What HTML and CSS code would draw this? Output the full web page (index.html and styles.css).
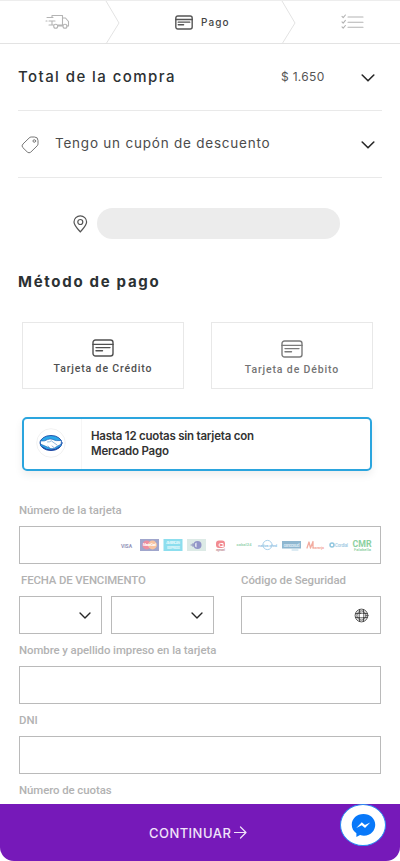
FILE: index.html
```
<!DOCTYPE html>
<html lang="es">
<head>
<meta charset="utf-8">
<title>Pago</title>
<link rel="stylesheet" href="styles.css">
</head>
<body>
<svg class="defs" width="0" height="0">
  <symbol id="card" viewBox="0 0 22 18">
    <rect x="1" y="1" width="20" height="16" rx="2.5"/>
    <path d="M1 5.4H21M4 8.6H18M4 11.8H10.5"/>
  </symbol>
  <symbol id="chevron" viewBox="0 0 14 8"><path d="M1.2 1L7 6.8L12.8 1"/></symbol>
</svg>
<div class="screen">
  <header class="steps">
    <div class="step step-ship">
      <svg class="truck" width="25" height="16" viewBox="0 0 25 16"><path d="M7 3V1.5H17.5V11H13M7 7V11H8.5M17.5 4H20.5L23.5 7.5V12H21.5M17.5 12H13M2 3.5H8M4 7H10M1 7H2M4 11H8"/><circle cx="10.7" cy="12.3" r="2"/><circle cx="20" cy="12.3" r="2"/></svg>
    </div>
    <svg class="divider" width="15" height="43" viewBox="0 0 15 43"><path d="M1 0L14 22L1 43"/></svg>
    <div class="step step-pay">
      <svg class="pay-icon" width="18" height="15"><use href="#card"/></svg>
      <span>Pago</span>
    </div>
    <svg class="divider" width="15" height="43" viewBox="0 0 15 43"><path d="M1 0L14 22L1 43"/></svg>
    <div class="step step-list">
      <svg class="checks" width="23" height="16" viewBox="0 0 23 16"><path d="M7 3H22M7 8.2H22M7 13.2H22"/><path d="M1 2.4L2.2 3.7L4.4 1M1 7.8L2.2 9.1L4.4 6.4M1 12.9L2.2 14.2L4.4 11.5"/></svg>
    </div>
  </header>

  <section class="row">
    <h2 class="total">Total de la compra</h2>
    <span class="amount">$ 1.650</span>
    <svg class="chev" width="14" height="8"><use href="#chevron"/></svg>
  </section>
  <section class="row">
    <svg class="tag" width="18" height="18" viewBox="0 0 18 18"><path d="M8.3 1.8Q9 1 10.2 1H13.5Q17 1 17 4.5V7.8Q17 9 16.2 9.8L9.7 16.2Q8 17.6 6.3 16L1.8 11.6Q.2 10 1.7 8.3Z"/><circle cx="13.3" cy="5" r="1.3"/></svg>
    <span class="coupon">Tengo un cupón de descuento</span>
    <svg class="chev" width="14" height="8"><use href="#chevron"/></svg>
  </section>

  <div class="address">
    <svg class="pin" width="15" height="18" viewBox="0 0 15 18"><path d="M7.3 17C5 14 1 10.5 1 7A6.3 6.2 0 0 1 13.6 7C13.6 10.5 9.6 14 7.3 17Z"/><circle cx="7.3" cy="7" r="2.5"/></svg>
    <div class="pill"></div>
  </div>

  <h2 class="method">Método de pago</h2>
  <div class="options">
    <div class="option"><svg width="22" height="18"><use href="#card"/></svg><span>Tarjeta de Crédito</span></div>
    <div class="option debit"><svg width="22" height="18"><use href="#card"/></svg><span>Tarjeta de Débito</span></div>
  </div>

  <div class="mercado">
    <div class="mp-logo">
      <svg width="30" height="30" viewBox="0 0 30 30"><circle class="ring" cx="15" cy="15" r="14.3"/><ellipse cx="15" cy="15" rx="11" ry="7.5" fill="#29a7e8" stroke="#2456ae"/><path d="M4.5 13Q9 13.5 11.5 11.6Q14 10.5 16 11.2Q20 13.4 25.5 12.5L25 16.3L20.8 18.5Q16 22.5 12 19.3L5 16.3Z" fill="#fff" stroke="#2965b8" stroke-width=".7"/><path d="M11.5 14Q14 14.2 15.3 12.8L21 17M12 18L14 20M16 18L18 19.5" fill="none" stroke="#5187c3" stroke-width=".6"/><path d="M6.2 19Q15 25.5 23.8 19" fill="none" stroke="#293d9b" stroke-width="1"/></svg>
    </div>
    <p>Hasta 12 cuotas sin tarjeta con<br>Mercado Pago</p>
  </div>

  <form class="form">
    <label class="number-label">Número de la tarjeta</label>
    <div class="field brands">
      <svg width="255" height="16" viewBox="0 0 255 16">
        <text x="4" y="10.5" textLength="11" class="brand bold" font-size="5" fill="#9192b8">VISA</text>
        <rect x="23" y="2" width="19" height="12" fill="#a0a6cc"/><circle cx="29.7" cy="8" r="4.4" fill="#ee8e9f"/><circle cx="35.5" cy="8" r="4.4" fill="#f8c3a0"/><text x="26" y="9.3" textLength="13" class="brand bold" font-size="3.4" fill="#fff">MasterCard</text>
        <rect x="46.5" y="2" width="19" height="12" fill="#8cdeee"/><text x="49" y="7.3" textLength="14" class="brand bold" font-size="4" fill="#dff7fb">AMERICAN</text><text x="50" y="11.5" textLength="13" class="brand bold" font-size="4" fill="#dff7fb">EXPRESS</text>
        <rect x="70" y="2" width="19" height="12" fill="#dceae6"/><circle cx="80.5" cy="8" r="4" fill="#9295c8"/><path d="M79.5 5.5A2.7 2.7 0 0 0 79.5 10.5Z" fill="#f4f7fa"/><path d="M74 8H78M76 6.5V9.5" stroke="#8f94bf"/>
        <rect x="99" y="3.5" width="9" height="7.5" rx="3" fill="#f28b91"/><path d="M106 9.5H103.500A1.500 1.500 0 0 1 103.500 6.500H106V10" fill="none" stroke="#fff"/><text x="99" y="14" textLength="9" class="brand" font-size="3" fill="#c999a0">argencard</text>
        <text x="119.5" y="9.3" textLength="15" class="brand bold" font-size="4" fill="#9bd5b4">cabal24</text>
        <circle cx="150.5" cy="8" r="4.6" fill="none" stroke="#a8d0eb"/><text x="141" y="9.5" textLength="19" class="brand bold" font-size="4" fill="#98c5e5">nativa cred</text>
        <rect x="165" y="4" width="19" height="7.5" fill="#8fb7d0"/><text x="166.5" y="9.5" textLength="16" class="brand bold" font-size="5" fill="#d3e5f0">cencosud</text><path d="M175 13H181" stroke="#b9d8e8"/>
        <path d="M190 11L192 5L193.5 11L196 4.5V11" fill="none" stroke="#f2aca0" stroke-width="1.3"/><text x="196" y="12" textLength="11" class="brand" font-size="3.6" fill="#f2a092">naranja</text>
        <circle cx="215" cy="8" r="2" fill="none" stroke="#8fc6df" stroke-width="1.5"/><text x="218" y="9.7" textLength="13" class="brand" font-size="4.5" fill="#9bc9df">Cordial</text>
        <text x="235.500" y="9.500" textLength="19" lengthAdjust="spacingAndGlyphs" class="brand bold" font-size="8.800" fill="#8bd0a0">CMR</text><text x="237" y="14" textLength="17" class="brand" font-size="4" fill="#83cb99">Falabella</text>
      </svg>
    </div>
    <div class="split">
      <div class="expiry">
        <label class="expiry-label">FECHA DE VENCIMENTO</label>
        <div class="selects">
          <div class="field month"><svg class="chev small" width="12" height="7"><use href="#chevron"/></svg></div>
          <div class="field year"><svg class="chev small" width="12" height="7"><use href="#chevron"/></svg></div>
        </div>
      </div>
      <div class="security">
        <label class="security-label">Código de Seguridad</label>
        <div class="field code">
          <svg class="help" width="15" height="15" viewBox="0 0 15 15"><circle cx="7.5" cy="7.5" r="6.4"/><circle cx="7.5" cy="7.5" r="4.6"/><rect x="5.2" y="5.2" width="4.6" height="4.6" rx="1.5"/><path d="M5.5 1.5V5.500M9.500 1.500V5.500M5.500 9.500V13.500M9.500 9.500V13.500M1.500 5.500H5.500M1.500 9.500H5.500M9.500 5.500H13.500M9.500 9.500H13.500"/></svg>
        </div>
      </div>
    </div>
    <label class="name-label">Nombre y apellido impreso en la tarjeta</label>
    <div class="field"></div>
    <label class="dni-label">DNI</label>
    <div class="field"></div>
    <label class="fees-label">Número de cuotas</label>
  </form>

  <footer class="continue">
    <span>CONTINUAR</span>
    <svg width="13" height="13" viewBox="0 0 13 13"><path d="M.5 6.5H12M6.500 1L12 6.500L6.500 12"/></svg>
    <div class="chat">
      <svg width="25" height="25" viewBox="0 0 26 26"><path d="M13 1C6 1 .8 5.800.8 12.200C.8 16 2.600 19 5.600 21V25L9.400 23C19 25.500 25.200 19 25.200 12.200C25.200 5.800 20 1 13 1Z" fill="#0878f9"/><path d="M5.500 15.500L11.200 9.500L14.500 12.500L20 9.800L14.600 15.700L11.200 12.800Z" fill="#fff"/></svg>
    </div>
  </footer>
</div>
</body>
</html>
```
FILE: styles.css
```
* { box-sizing: border-box; }
body { margin: 0; background: #fff; font-family: Inter, sans-serif; color: #2c3133; }
h2, p { margin: 0; }
svg { display: block; flex: none; fill: none; stroke-linecap: round; stroke-linejoin: round; }
.defs { position: absolute; }
.screen { width: 400px; height: 861px; overflow: hidden; display: flex; flex-direction: column; }

.steps { height: 44px; flex: none; display: flex; border-top: 1px solid #ededed; border-bottom: 1px solid #e3e3e3; }
.step { display: flex; align-items: center; }
.step-ship { width: 105px; padding-left: 45px; }
.step-pay { width: 161px; padding-left: 55px; gap: 8px; font-size: 10px; font-weight: 500; letter-spacing: 1.05px; color: #444; }
.step-pay span { margin-top: -1px; }
.step-list { padding-left: 45px; }
.divider { stroke: #e3e3e3; }
.truck, .checks { stroke: #b4b4b4; stroke-width: 1.1; }
.pay-icon { stroke: #555; stroke-width: 1.7; }

.row { height: 67px; flex: none; margin: 0 18px; padding-right: 7px; display: flex; align-items: center; border-bottom: 1px solid #e9e9e9; }
.total { width: 263px; margin-top: -2px; font-size: 15px; font-weight: 500; letter-spacing: 1.43px; white-space: nowrap; }
.amount { flex: 1; margin-top: -1px; font-size: 12px; letter-spacing: .3px; color: #555; }
.chev { margin-top: 1px; stroke: #282828; stroke-width: 1.6; }
.tag { margin: 1px 17px 0 3px; stroke: #777; }
.coupon { flex: 1; margin: -2px 0 0 -1px; font-size: 13.5px; letter-spacing: .78px; color: #4c4c4c; white-space: nowrap; }

.address { height: 31px; flex: none; margin: 30px 0 0 73px; display: flex; align-items: center; gap: 9px; }
.pin { stroke: #555; stroke-width: 1.2; }
.pill { width: 243px; height: 31px; border-radius: 16px; background: #ececec; }

.method { height: 24px; flex: none; margin: 31px 0 0 18px; line-height: 24px; font-size: 15px; font-weight: 700; letter-spacing: 1.7px; white-space: nowrap; }
.options { flex: none; display: flex; gap: 27px; margin: 28px 0 0 22px; }
.option { width: 162px; height: 67px; border: 1px solid #e8e8e8; padding-top: 16px; display: flex; flex-direction: column; align-items: center; gap: 5px; font: 500 10.5px/14px Roboto, sans-serif; letter-spacing: .86px; color: #505050; }
.option svg { stroke: #505050; stroke-width: 1.4; }
.debit { padding-top: 17px; color: #747474; }
.debit svg { stroke: #7b7b7b; }

.mercado { width: 350px; height: 54px; flex: none; margin: 28px 0 0 22px; border: 2px solid #2ba5de; border-radius: 5px; display: flex; box-shadow: 0 4px 8px rgba(0,0,0,.07); }
.mp-logo { width: 58px; padding: 9px 0 0 12px; border-right: 1px solid #f6f6f6; }
.ring { stroke: #eee; stroke-width: .8; }
.mercado p { padding: 10px 0 0 9px; font-size: 11.5px; line-height: 15px; font-weight: 600; letter-spacing: -.22px; color: #333; white-space: nowrap; }

.form { flex: none; height: 333px; padding: 32px 19px 0 19px; font: 500 11.4px/14px Roboto, sans-serif; letter-spacing: -.06px; color: #b2b2b2; }
label { display: block; height: 14px; margin: 9px 0; white-space: nowrap; }
.number-label, .expiry-label, .security-label { margin-top: 0; }
.field { height: 38px; border: 1px solid #bababa; display: flex; align-items: center; }
.brands { justify-content: flex-end; padding-right: 8px; }
.brand { font-family: Roboto, sans-serif; letter-spacing: 0; }
.bold { font-weight: 700; }
.split { display: flex; justify-content: space-between; padding-top: 9px; }
.expiry-label { padding-left: 2px; letter-spacing: -.12px; }
.selects { display: flex; gap: 9px; }
.month, .year, .code { justify-content: flex-end; padding-right: 10px; }
.month { width: 83px; }
.year { width: 103px; }
.code { width: 140px; padding-right: 11px; }
.help { stroke: #444; stroke-width: .9; }

.continue { position: relative; height: 57px; flex: none; padding-left: 149px; display: flex; align-items: center; gap: 3px; background: #7619b9; color: #f1e4fa; border-radius: 0 0 14px 14px; font-size: 13px; font-weight: 500; letter-spacing: .45px; }
.continue > svg { stroke: #f1e4fa; stroke-width: 1.2; }
.chat { position: absolute; left: 340px; top: 0; width: 46px; height: 42px; border: 1px solid #258df5; border-radius: 50%; background: #fff; display: flex; align-items: center; justify-content: center; }
```
